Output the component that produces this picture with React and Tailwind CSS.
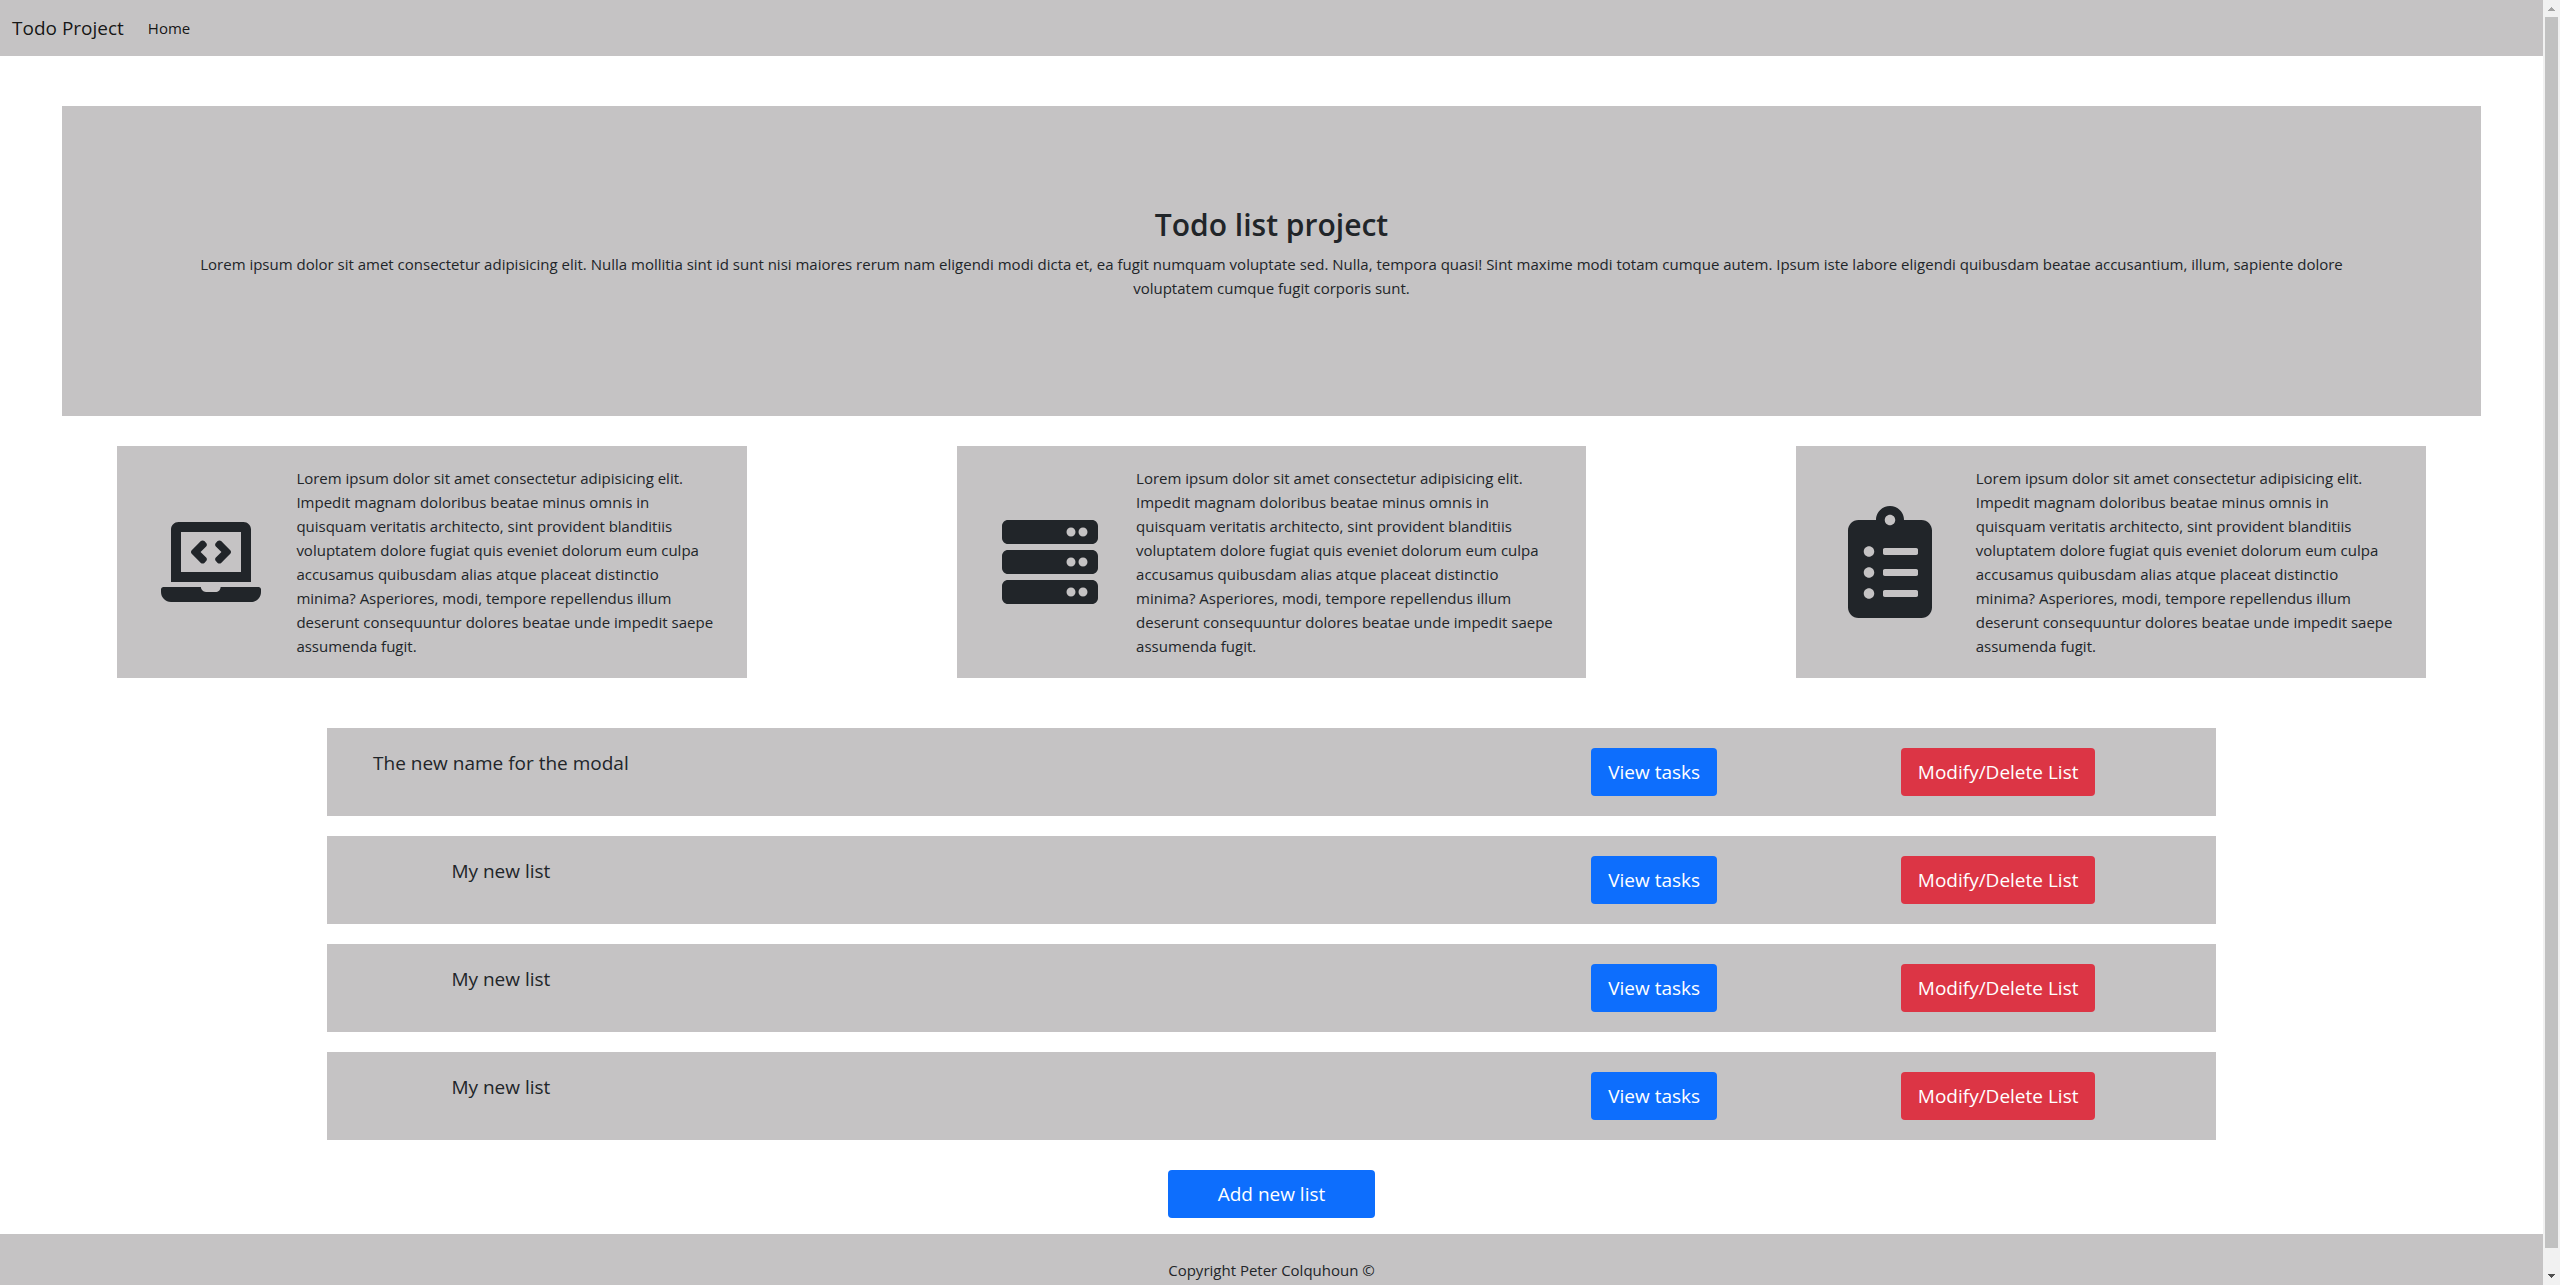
import React from "react";
import { FaLaptopCode, FaServer, FaClipboardList } from "react-icons/fa";

const CARD_TEXT =
  "Lorem ipsum dolor sit amet consectetur adipisicing elit. Impedit magnam doloribus beatae minus omnis in quisquam veritatis architecto, sint provident blanditiis voluptatem dolore fugiat quis eveniet dolorum eum culpa accusamus quibusdam alias atque placeat distinctio minima? Asperiores, modi, tempore repellendus illum deserunt consequuntur dolores beatae unde impedit saepe assumenda fugit.";

const lists = [
  { id: 1, name: "The new name for the modal" },
  { id: 2, name: "My new list" },
  { id: 3, name: "My new list" },
  { id: 4, name: "My new list" },
];

function Navbar() {
  return (
    <nav className="flex h-14 items-center bg-[#c5c3c4] px-3 text-black/90">
      <a href="#" className="mr-6 text-[19px] leading-[30px]">Todo Project</a>
      <a href="#" className="text-[15px] leading-6">Home</a>
    </nav>
  );
}

function Hero() {
  return (
    <section className="mx-[62px] mt-[50px] bg-[#c5c3c4] px-[127px] pt-[100px] pb-[116px] text-center">
      <h1 className="mb-2 text-[30px] leading-[38px] font-semibold">Todo list project</h1>
      <p className="text-[15px] leading-6">
        Lorem ipsum dolor sit amet consectetur adipisicing elit. Nulla mollitia sint id sunt nisi maiores rerum nam
        eligendi modi dicta et, ea fugit numquam voluptate sed. Nulla, tempora quasi! Sint maxime modi totam cumque
        autem. Ipsum iste labore eligendi quibusdam beatae accusantium, illum, sapiente dolore voluptatem cumque fugit
        corporis sunt.
      </p>
    </section>
  );
}

function FeatureCard({ icon }) {
  return (
    <article className="mx-auto flex w-3/4 items-center bg-[#c5c3c4] p-5">
      <div className="flex w-1/4 shrink-0 justify-center">{icon}</div>
      <p className="w-3/4 px-3 text-[15px] leading-6">{CARD_TEXT}</p>
    </article>
  );
}

function ListRow({ name }) {
  return (
    <li className="flex items-start bg-[#c5c3c4] py-5 pr-[46px]">
      <h2 className="w-[348px] text-center text-[19px] leading-[30px]">{name}</h2>
      <div className="ml-auto flex w-[344px] justify-center">
        <button type="button" className="h-12 rounded bg-[#0d6efd] px-[17px] text-[19px] leading-[30px] text-white">
          View tasks
        </button>
      </div>
      <div className="flex w-[344px] justify-center">
        <button type="button" className="h-12 rounded bg-[#dc3545] px-[17px] text-[19px] leading-[30px] text-white">
          Modify/Delete List
        </button>
      </div>
    </li>
  );
}

function Scrollbar() {
  return (
    <div aria-hidden="true" className="flex w-[17px] shrink-0 flex-col items-center bg-[#f1f1f1]">
      <svg width="17" height="17" viewBox="0 0 17 17" fill="#a3a3a3" shapeRendering="crispEdges">
        <path d="M8 7h1v1h1v1h1v1h1v1H5v-1h1V9h1V8h1z" />
      </svg>
      <div className="w-[13px] grow bg-[#c1c1c1]" />
      <svg width="17" height="37" viewBox="0 0 17 37" fill="#505050" shapeRendering="crispEdges">
        <path d="M5 26h7v1h-1v1h-1v1H9v1H8v-1H7v-1H6v-1H5z" />
      </svg>
    </div>
  );
}

export default function App() {
  return (
    <div className="flex h-screen overflow-hidden bg-white font-['Open_Sans','Noto_Sans',sans-serif] text-[#212529]">
      <div className="min-w-0 grow overflow-hidden">
        <Navbar />
        <main>
          <Hero />
          <section className="mt-[30px] grid grid-cols-3 px-3">
            <FeatureCard icon={<FaLaptopCode className="h-20 w-[100px]" />} />
            <FeatureCard icon={<FaServer className="size-24" />} />
            <FeatureCard icon={<FaClipboardList className="h-28 w-[84px]" />} />
          </section>
          <section className="mt-[50px] px-3 pb-4">
            <ul className="mx-auto flex w-3/4 flex-col gap-5">
              {lists.map((list) => (
                <ListRow key={list.id} name={list.name} />
              ))}
            </ul>
            <button
              type="button"
              className="mx-auto mt-[30px] block h-12 rounded bg-[#0d6efd] px-[50px] text-[19px] leading-[30px] text-white"
            >
              Add new list
            </button>
          </section>
        </main>
        <footer className="bg-[#c5c3c4] p-6 text-center text-[15px] leading-6">Copyright Peter Colquhoun ©</footer>
      </div>
      <Scrollbar />
    </div>
  );
}
